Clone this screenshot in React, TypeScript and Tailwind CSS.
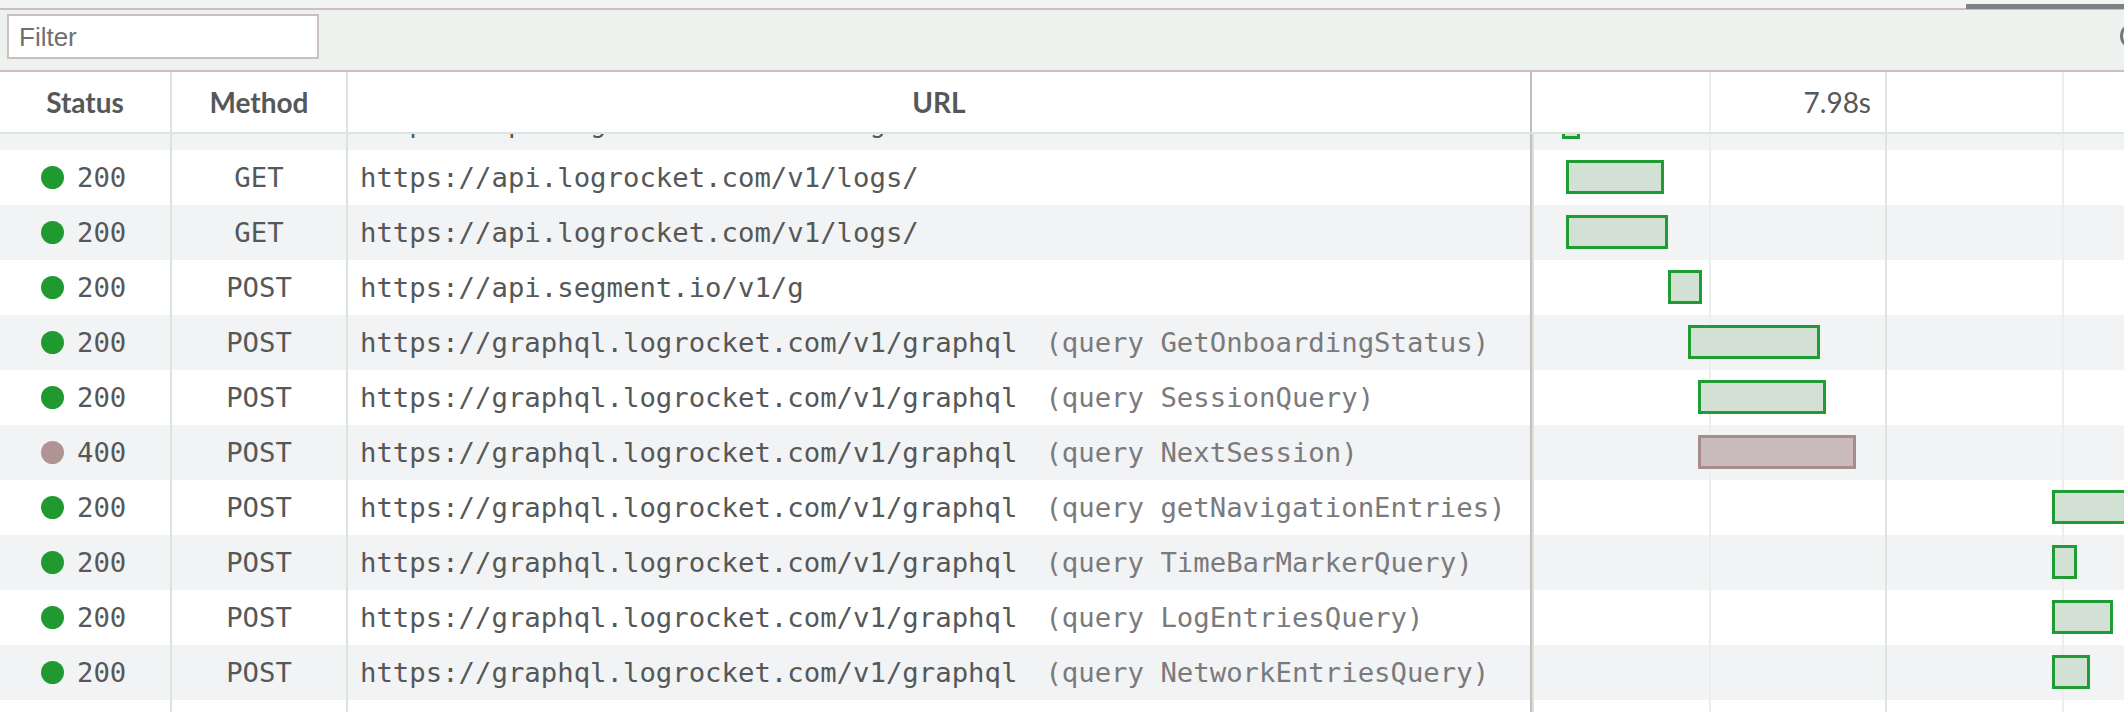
import React from "react";

type Row = {
  status?: number;
  method?: string;
  url?: string;
  query?: string;
  bar?: [number, number];
  err?: boolean;
};

const GQL = "https://graphql.logrocket.com/v1/graphql";
const LOGS = "https://api.logrocket.com/v1/logs/";

const rows: Row[] = [
  { url: LOGS, bar: [30, 18] },
  { status: 200, method: "GET", url: LOGS, bar: [34, 98] },
  { status: 200, method: "GET", url: LOGS, bar: [34, 102] },
  { status: 200, method: "POST", url: "https://api.segment.io/v1/g", bar: [136, 34] },
  { status: 200, method: "POST", url: GQL, query: "GetOnboardingStatus", bar: [156, 132] },
  { status: 200, method: "POST", url: GQL, query: "SessionQuery", bar: [166, 128] },
  { status: 400, method: "POST", url: GQL, query: "NextSession", bar: [166, 158], err: true },
  { status: 200, method: "POST", url: GQL, query: "getNavigationEntries", bar: [520, 100] },
  { status: 200, method: "POST", url: GQL, query: "TimeBarMarkerQuery", bar: [520, 25] },
  { status: 200, method: "POST", url: GQL, query: "LogEntriesQuery", bar: [520, 61] },
  { status: 200, method: "POST", url: GQL, query: "NetworkEntriesQuery", bar: [520, 38] },
  {},
];

const mono = { fontFamily: '"DejaVu Sans Mono", monospace' };

function GridLines({ body }: { body?: boolean }) {
  return (
    <>
      {body && <div className="absolute top-0 bottom-0 left-0 w-[2px] bg-[#d6e5d8]" />}
      <div className="absolute top-0 bottom-0 left-[177px] w-[2px] bg-[#ebeeec]" />
      <div className="absolute top-0 bottom-0 left-[353px] w-[2px] bg-[#dde5de]" />
      <div className="absolute top-0 bottom-0 left-[530px] w-[2px] bg-[#ebeeec]" />
    </>
  );
}

function TableRow({ row, index }: { row: Row; index: number }) {
  const gray = index % 2 === 0;
  return (
    <div
      className={`flex h-[55px] shrink-0 text-[#555858] ${gray ? "bg-[#f2f3f4]" : "bg-white"} ${
        index === 0 ? "mt-[-39px]" : ""
      }`}
      style={mono}
    >
      <div className="w-[172px] shrink-0 flex items-center pl-[41px] border-r-2 border-[#d8e5da]">
        {row.status !== undefined && (
          <>
            <span
              className={`w-[23px] h-[23px] rounded-full ${row.err ? "bg-[#b09393]" : "bg-[#209a30]"}`}
            />
            <span className="ml-[13px] text-[27.3px] leading-none">{row.status}</span>
          </>
        )}
      </div>
      <div className="w-[176px] shrink-0 flex items-center justify-center border-r-2 border-[#d8e5da] text-[27.3px] leading-none">
        {row.method}
      </div>
      <div className="w-[1184px] shrink-0 flex items-center pl-[12px] border-r-2 border-[#c9bcbc] text-[27.3px] leading-none whitespace-nowrap overflow-hidden">
        {row.url && <span>{row.url}</span>}
        {row.query && (
          <span className="ml-[28px] text-[#7a7a7c]">(query {row.query})</span>
        )}
      </div>
      <div className="relative flex-1">
        <GridLines body />
        {row.bar && (
          <div
            className={`absolute top-[10px] h-[34px] border-[3px] ${
              row.err ? "border-[#a98c8c] bg-[#c9bbbb]" : "border-[#1f9c33] bg-[#d3e1d4]"
            }`}
            style={{ left: row.bar[0], width: row.bar[1] }}
          />
        )}
      </div>
    </div>
  );
}

export default function App() {
  return (
    <div className="w-[2124px] h-[712px] overflow-hidden bg-white flex flex-col">
      {/* top strip */}
      <div className="h-[10px] shrink-0 bg-[#f3f4f4] border-b-2 border-[#cdbfc0] flex justify-end items-start">
        <div className="mt-[4px] w-[158px] h-[5px] bg-[#808087]" />
      </div>
      {/* toolbar */}
      <div className="h-[62px] shrink-0 bg-[#eef2ef] border-b-2 border-[#cdbfc0] flex items-start justify-between">
        <div className="ml-[7px] mt-[4px] w-[312px] h-[45px] bg-white border-2 border-[#cbbfbf] flex items-center pl-[10px]">
          <span
            className="text-[26px] leading-none text-[#707070]"
            style={{ fontFamily: '"Liberation Sans", Arial, sans-serif' }}
          >
            Filter
          </span>
        </div>
        <div className="mt-[13px] mr-[-22px] w-[26px] h-[26px] rounded-full border-[3px] border-[#76767b]" />
      </div>
      {/* header */}
      <div
        className="h-[62px] shrink-0 flex border-b-2 border-[#dbe6dd] bg-white text-[#555858]"
        style={{ fontFamily: "Lato, sans-serif" }}
      >
        <div className="w-[172px] shrink-0 flex items-center justify-center border-r-2 border-[#d8e5da] text-[28px] font-bold">
          Status
        </div>
        <div className="w-[176px] shrink-0 flex items-center justify-center border-r-2 border-[#d8e5da] text-[28px] font-bold">
          Method
        </div>
        <div className="w-[1184px] shrink-0 flex items-center justify-center border-r-2 border-[#c9bcbc] text-[28px] font-bold">
          URL
        </div>
        <div className="relative flex-1">
          <GridLines />
          <div className="w-[354px] h-full flex items-center justify-end pr-[15px] text-[28px]">
            7.98s
          </div>
        </div>
      </div>
      {/* body */}
      <div className="flex-1 overflow-hidden flex flex-col">
        {rows.map((r, i) => (
          <TableRow key={i} row={r} index={i} />
        ))}
      </div>
    </div>
  );
}
